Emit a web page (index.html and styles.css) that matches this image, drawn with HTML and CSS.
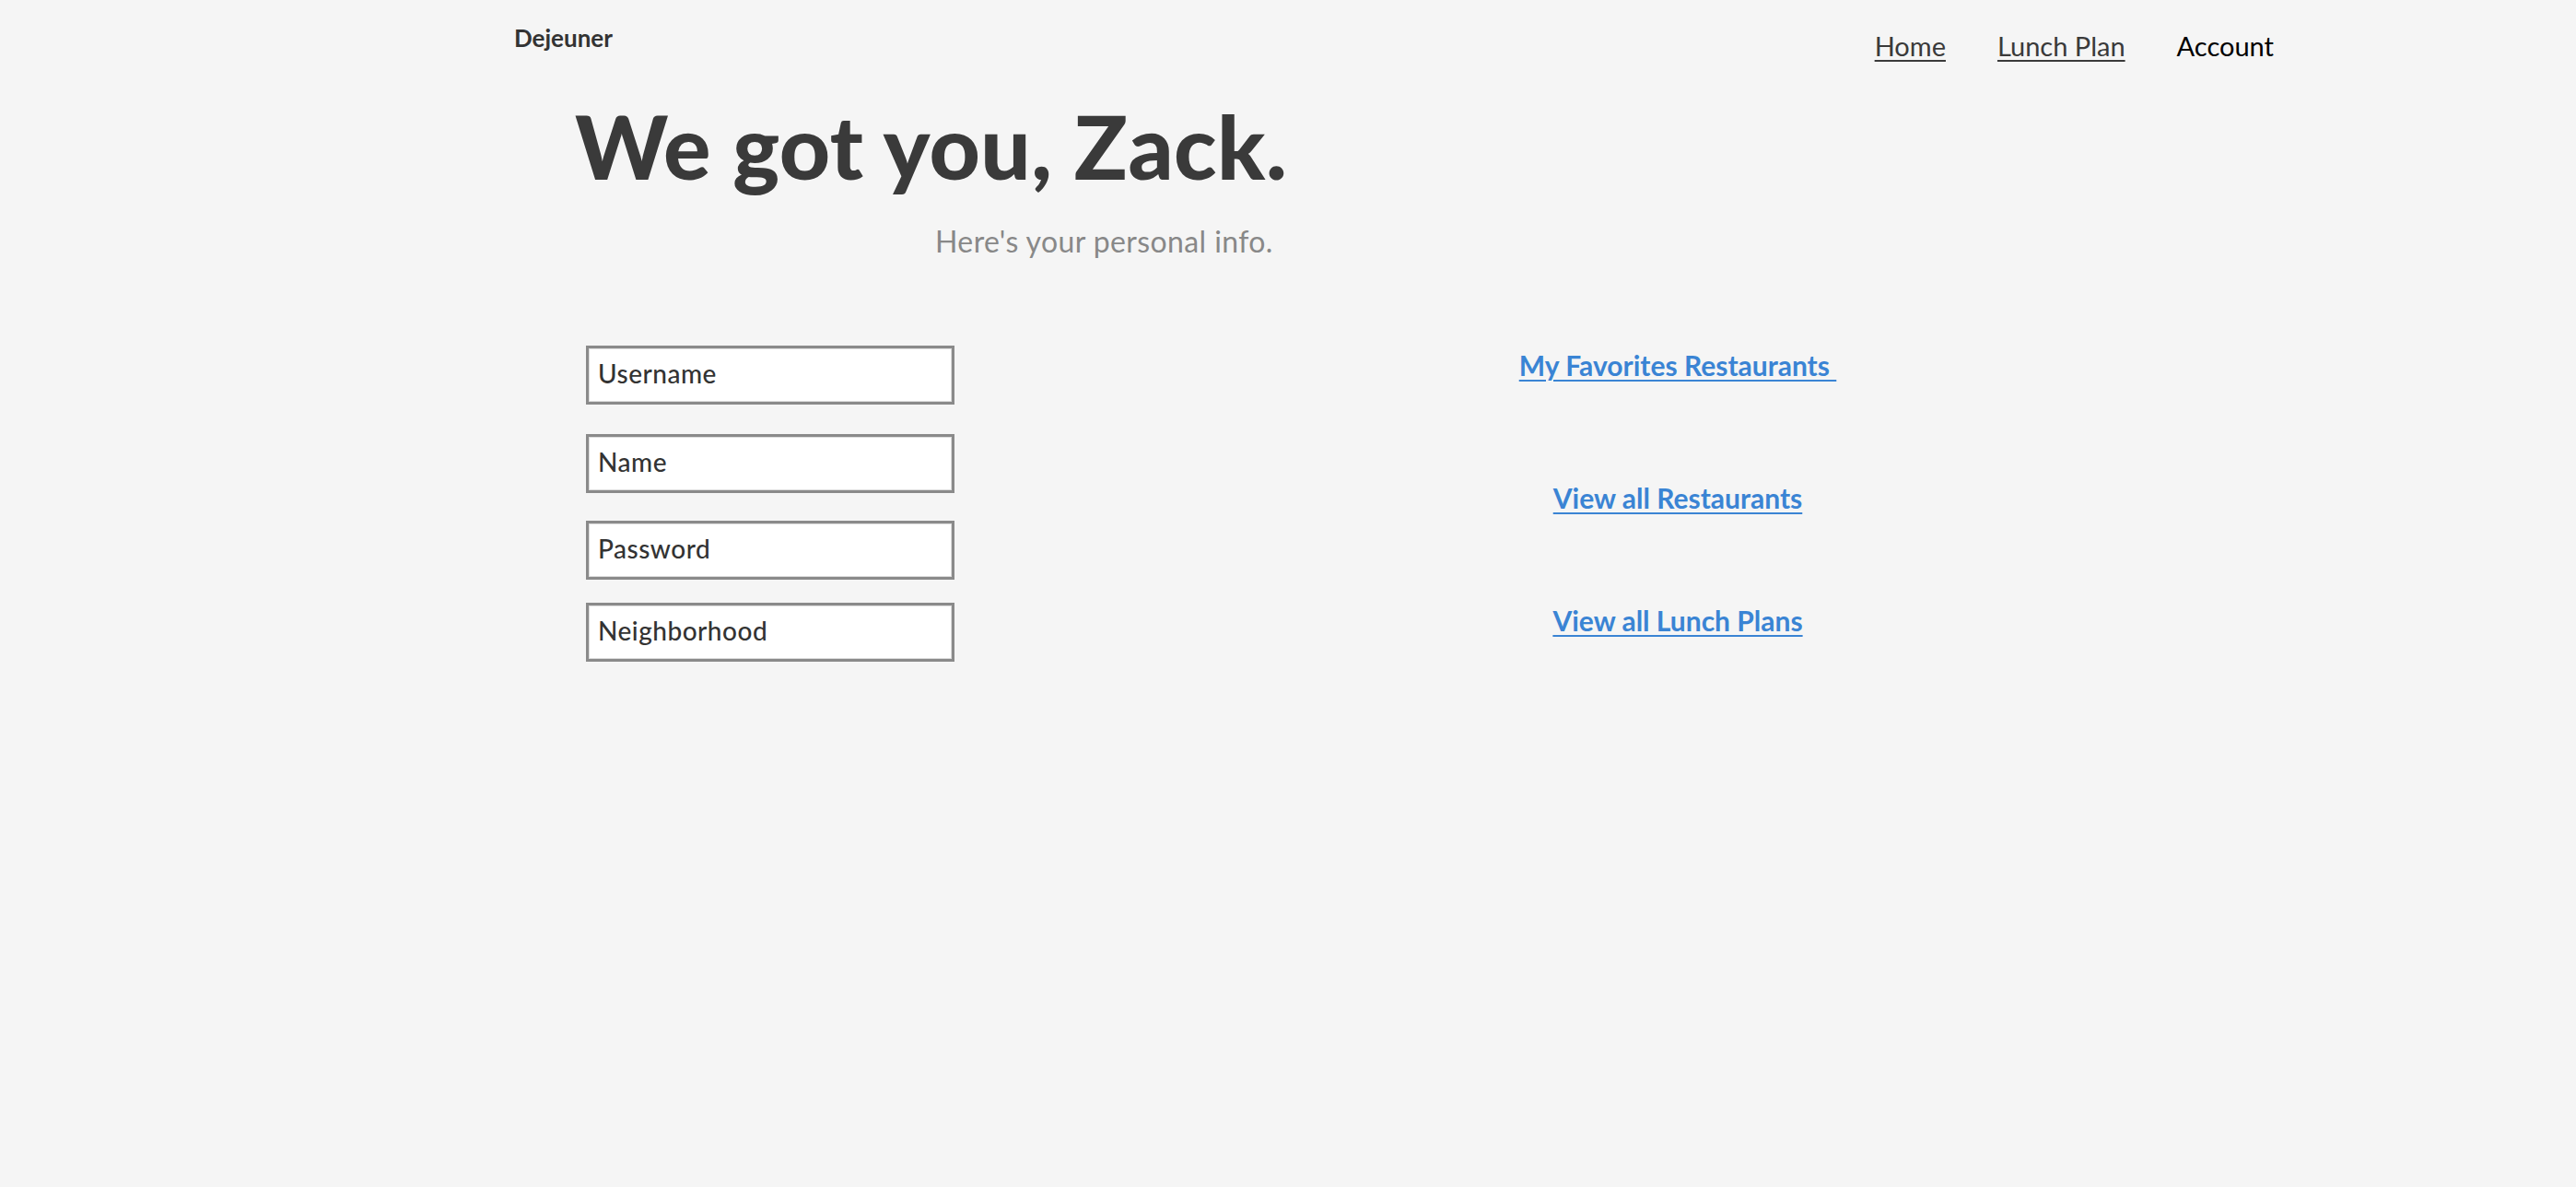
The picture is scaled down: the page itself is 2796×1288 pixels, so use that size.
FILE: index.html
```
<!DOCTYPE html>
<html lang="en">
<head>
<meta charset="utf-8">
<title>Dejeuner</title>
<link rel="stylesheet" href="styles.css">
</head>
<body>
<header class="topbar">
  <div class="brand">Dejeuner</div>
  <nav class="nav">
    <a class="nav-link" href="#">Home</a>
    <a class="nav-link" href="#">Lunch Plan</a>
    <a class="nav-link current" href="#">Account</a>
  </nav>
</header>
<main class="page">
  <h1 class="title">We got you, Zack.</h1>
  <p class="subtitle">Here's your personal info.</p>
  <section class="content">
    <form class="fields">
      <input class="field f1" type="text" placeholder="Username">
      <input class="field f2" type="text" placeholder="Name">
      <input class="field f3" type="password" placeholder="Password">
      <input class="field f4" type="text" placeholder="Neighborhood">
    </form>
    <div class="links">
      <a class="link l1" href="#">My Favorites Restaurants </a>
      <a class="link l2" href="#">View all Restaurants</a>
      <a class="link l3" href="#">View all Lunch Plans</a>
    </div>
  </section>
</main>
</body>
</html>
```
FILE: styles.css
```
html, body {
  margin: 0;
  padding: 0;
  background: #f5f5f5;
  font-family: Lato, "Noto Sans", sans-serif;
  color: #333;
}

.topbar {
  display: flex;
  justify-content: space-between;
  align-items: flex-start;
  padding: 0 328px 0 558px;
}

.brand {
  margin-top: 28px;
  font-size: 26px;
  line-height: 1;
  font-weight: 700;
  color: #333;
}

.nav {
  display: flex;
  gap: 56px;
  margin-top: 35px;
}

.nav-link {
  font-size: 29px;
  line-height: 1;
  color: #3a3a3a;
  text-decoration: underline;
  text-underline-offset: 4px;
  text-decoration-thickness: 2px;
}

.nav-link.current {
  color: #000;
  text-decoration: none;
}

.page {
  padding-left: 624px;
}

.title {
  margin: 46px 0 0 0;
  font-size: 96px;
  line-height: 1;
  font-weight: 900;
  letter-spacing: 0.5px;
  color: #3a3a3a;
}

.subtitle {
  margin: 40px 0 0 391px;
  font-size: 32px;
  line-height: 1;
  letter-spacing: 0.4px;
  color: #888;
}

.content {
  display: flex;
  margin-top: 97px;
  margin-left: 12px;
}

.fields {
  display: flex;
  flex-direction: column;
  width: 400px;
}

.field {
  box-sizing: border-box;
  width: 400px;
  height: 64px;
  margin: 0;
  padding: 0 10px 4px 10px;
  border: 3px solid #8a8a8a;
  box-shadow: inset 0 0 0 1px #dcdcdc;
  background: #fff;
  font-family: Lato, "Noto Sans", sans-serif;
  font-size: 28px;
  font-weight: 500;
  letter-spacing: 0.5px;
  color: #333;
  outline: none;
}

.field::placeholder {
  color: #333;
  opacity: 1;
}

.f2 { margin-top: 32px; }
.f3 { margin-top: 30px; }
.f4 { margin-top: 25px; }

.links {
  display: flex;
  flex-direction: column;
  align-items: center;
  width: 600px;
  margin-left: 485px;
  padding-top: 6px;
}

.link {
  font-size: 30px;
  line-height: 1;
  font-weight: 700;
  color: #3a84d4;
  text-decoration: underline;
  text-underline-offset: 4px;
  text-decoration-thickness: 2px;
  white-space: pre;
}

.l2 { margin-top: 114px; }
.l3 { margin-top: 103px; }
```
